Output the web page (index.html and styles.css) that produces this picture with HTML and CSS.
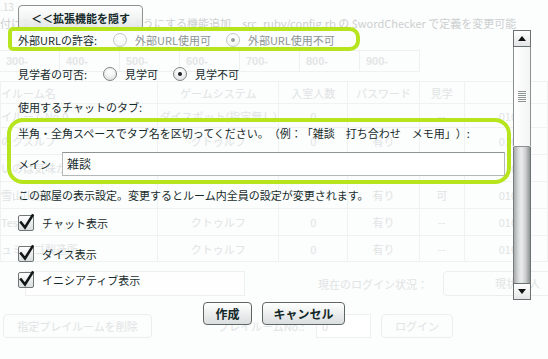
FILE: index.html
```html
<!DOCTYPE html>
<html lang="ja">
<head>
<meta charset="utf-8">
<title>プレイルーム作成</title>
<link rel="stylesheet" href="styles.css">
</head>
<body>
<div class="page">
  <div class="ver">.13</div>
  <div class="news">付けた場合にも入室できるようにする機能追加　src_ruby/config.rb の $wordChecker で定義を変更可能</div>
  <div class="ranges"><span>300-</span><span>400-</span><span>500-</span><span>600-</span><span>700-</span><span>800-</span><span>900-</span></div>
  <table class="rooms">
    <tr class="head"><th class="c-name">イルーム名</th><th class="c-game">ゲームシステム</th><th class="c-num">入室人数</th><th class="c-pass">パスワード</th><th class="c-view">見学</th><th class="c-date"></th></tr>
    <tr class="r-short"><td class="c-name">イルームNo.0</td><td>ダイスボット(指定無し)</td><td>0</td><td></td><td>--</td><td class="c-date">010</td></tr>
    <tr><td class="c-name">のクスルフ</td><td>クトゥルフ</td><td>0</td><td>有り</td><td></td><td class="c-date">010</td></tr>
    <tr><td class="c-name">いのは気味が</td><td>クトゥルフ</td><td>0</td><td>有り</td><td>--</td><td class="c-date">010</td></tr>
    <tr><td class="c-name">雪山山荘</td><td></td><td></td><td>有り</td><td>可</td><td class="c-date">010</td></tr>
    <tr><td class="c-name">Test</td><td>クトゥルフ</td><td>0</td><td>有り</td><td>--</td><td class="c-date">010</td></tr>
    <tr class="r-last"><td class="c-name">ュミンゴ製造所</td><td>クトゥルフ</td><td>0</td><td>有り</td><td>--</td><td class="c-date">010</td></tr>
  </table>
  <div class="login">
    <span class="ghost-box"></span>
    <span class="login-label">現在のログイン状況：</span>
    <span class="login-box">現状27人</span>
  </div>
  <div class="ghost-actions">
    <span class="ghost-btn del">指定プレイルームを削除</span>
    <span class="no-label">プレイルームNo.:</span>
    <span class="ghost-input">0</span>
    <span class="ghost-btn enter">ログイン</span>
  </div>
</div>

<div class="dialog">
  <div class="top"><button class="btn toggle">＜＜拡張機能を隠す</button></div>
  <div class="panel">
    <div class="content">
      <div class="row r1">
        <span class="lbl">外部URLの許容:</span>
        <label class="opt disabled"><span class="radio"></span>外部URL使用可</label>
        <label class="opt disabled"><span class="radio on"></span>外部URL使用不可</label>
      </div>
      <div class="row r2">
        <span class="lbl">見学者の可否:</span>
        <label class="opt"><span class="radio"></span>見学可</label>
        <label class="opt"><span class="radio on"></span>見学不可</label>
      </div>
      <div class="row r3">使用するチャットのタブ:</div>
      <div class="row r4">半角・全角スペースでタブ名を区切ってください。（例：「雑談　打ち合わせ　メモ用」）:</div>
      <div class="row r5">
        <span class="lbl">メイン</span>
        <span class="field">雑談</span>
      </div>
      <div class="row r6">この部屋の表示設定。変更するとルーム内全員の設定が変更されます。</div>
      <label class="row check c1"><span class="cbox"><svg viewBox="0 0 16 16" width="16" height="16"><path d="M3 7.5 L7 12.5 L14.5 0.5" /></svg></span>チャット表示</label>
      <label class="row check c2"><span class="cbox"><svg viewBox="0 0 16 16" width="16" height="16"><path d="M3 7.5 L7 12.5 L14.5 0.5" /></svg></span>ダイス表示</label>
      <label class="row check c3"><span class="cbox"><svg viewBox="0 0 16 16" width="16" height="16"><path d="M3 7.5 L7 12.5 L14.5 0.5" /></svg></span>イニシアティブ表示</label>
    </div>
    <div class="scrollbar">
      <div class="sb-btn"><svg viewBox="0 0 8 5" width="8" height="5"><path d="M0 5 L4 0 L8 5 Z"/></svg></div>
      <div class="sb-thumb"><span class="grip"></span></div>
      <div class="sb-track"></div>
      <div class="sb-btn"><svg viewBox="0 0 8 5" width="8" height="5"><path d="M0 0 L8 0 L4 5 Z"/></svg></div>
    </div>
  </div>
  <div class="actions">
    <button class="btn act make">作成</button>
    <button class="btn act cancel">キャンセル</button>
  </div>
</div>

<div class="mark mark1"></div>
<div class="mark mark2"></div>
</body>
</html>
```

FILE: styles.css
```css
* { box-sizing: border-box; }
html, body { margin: 0; padding: 0; }
body {
  width: 548px;
  height: 359px;
  overflow: hidden;
  position: relative;
  background: #fcfdfd;
  font-family: "Noto Sans CJK JP", "Noto Sans", sans-serif;
  font-size: 11px;
  color: #172b2b;
  text-spacing-trim: space-all;
}

/* ---------- faded page behind the dialog ---------- */
.page {
  width: 548px;
  height: 359px;
  overflow: hidden;
  color: #e0e4e4;
  font-size: 11px;
}
.ver {
  height: 14px;
  padding-top: 1px;
  line-height: 12px;
  font-size: 10px;
  color: #d6dada;
}
.news {
  margin-top: 2px;
  height: 14px;
  line-height: 14px;
  white-space: nowrap;
  color: #ccd0d0;
}
.ranges {
  display: flex;
  margin-top: 20px;
  height: 22px;
}
.ranges span {
  width: 60px;
  flex-shrink: 0;
  border: 1px solid #eff1f1;
  border-left: none;
  padding-left: 6px;
  line-height: 20px;
  font-family: "Liberation Sans", sans-serif;
  font-weight: bold;
  color: #e3e6e6;
}
.rooms {
  margin-top: 9px;
  border-collapse: collapse;
  table-layout: fixed;
}
.rooms th, .rooms td {
  height: 27px;
  padding: 0;
  border: 1px solid #f0f2f2;
  font-weight: normal;
  text-align: center;
  white-space: nowrap;
  overflow: hidden;
}
.rooms .head th { height: 22px; }
.rooms .r-short td { height: 24px; }
.rooms .r-last td { height: 26px; }
.rooms .c-name { width: 175px; text-align: left; }
.rooms .c-game { width: 122px; }
.rooms .c-num { width: 74px; }
.rooms .c-pass { width: 75px; }
.rooms .c-view { width: 50px; }
.rooms .c-date { width: 90px; text-align: left; padding-left: 34px; }

.login {
  margin-top: 9px;
  height: 25px;
  display: flex;
  align-items: center;
}
.login > span { flex-shrink: 0; }
.ghost-box {
  margin-left: 25px;
  width: 220px;
  height: 25px;
  border: 1px solid #eef0f0;
  background: #fefefe;
}
.login-label {
  margin-left: 73px;
  width: 125px;
  white-space: nowrap;
}
.login-box {
  width: 130px;
  height: 25px;
  border: 1px solid #eceeee;
  border-radius: 4px;
  padding-left: 51px;
  line-height: 23px;
  white-space: nowrap;
}
.ghost-actions {
  margin-top: 18px;
  height: 24px;
  display: flex;
  align-items: center;
  white-space: nowrap;
}
.ghost-actions > span { flex-shrink: 0; }
.ghost-btn {
  height: 24px;
  border: 1px solid #eceeee;
  border-radius: 4px;
  text-align: center;
  line-height: 22px;
}
.ghost-btn.del { margin-left: 3px; width: 149px; }
.no-label { margin-left: 66px; width: 98px; }
.ghost-input {
  width: 55px;
  height: 24px;
  border: 1px solid #eef0f0;
  background: #fff;
  padding-left: 5px;
  line-height: 22px;
}
.ghost-btn.enter { margin-left: 10px; width: 72px; }

/* ---------- dialog ---------- */
.dialog {
  position: absolute;
  left: 0;
  top: 0;
  width: 548px;
  height: 359px;
  display: flex;
  flex-direction: column;
}
.top {
  height: 30px;
  padding: 5px 0 0 18px;
}
.btn {
  font-family: "Noto Sans CJK JP", "Noto Sans", sans-serif;
  font-weight: bold;
  color: #132828;
  padding: 0;
  cursor: pointer;
}
.toggle {
  width: 125px;
  height: 25px;
  font-size: 11px;
  border: 1px solid #8c9191;
  border-radius: 4px;
  background: linear-gradient(rgba(255,255,255,0.85), rgba(226,229,229,0.85));
}
.panel {
  display: flex;
  width: 531px;
  height: 270px;
}
.content {
  width: 513px;
  overflow: hidden;
  padding-left: 18px;
  display: flex;
  flex-direction: column;
}
.row {
  height: 20px;
  display: flex;
  align-items: center;
  white-space: nowrap;
  flex-shrink: 0;
}
.r2 { margin-top: 14px; }
.r3 { margin-top: 13px; }
.r4 { margin-top: 6px; }
.r5 { margin-top: 9px; height: 24px; }
.r6 { margin-top: 9px; }
.c1 { margin-top: 8px; }
.c2 { margin-top: 11px; }
.c3 { margin-top: 6px; }

.r1 .lbl { width: 95px; }
.r2 .lbl { width: 85px; }
.opt {
  display: flex;
  align-items: center;
  gap: 8px;
  margin-right: 15px;
}
.opt.disabled { color: #8d9494; }
.radio {
  width: 14px;
  height: 14px;
  border-radius: 50%;
  border: 1px solid #7e8585;
  background: radial-gradient(circle at 50% 30%, #ffffff 0%, #f2f3f3 45%, #d3d7d7 100%);
  position: relative;
}
.radio.on::after {
  content: "";
  position: absolute;
  left: 4px;
  top: 4px;
  width: 4px;
  height: 4px;
  border-radius: 50%;
  background: #1a1f1f;
}
.disabled .radio {
  border-color: #c3c8c8;
  background: radial-gradient(circle at 50% 30%, #ffffff 0%, #f7f8f8 60%, #e6e9e9 100%);
}
.disabled .radio.on::after { background: #9aa0a0; }

.r5 .lbl { width: 44px; }
.field {
  width: 443px;
  height: 24px;
  border: 1px solid #b3b8b8;
  border-top-color: #8f9595;
  background: #fff;
  padding-left: 4px;
  line-height: 22px;
  font-size: 12px;
}

.check { gap: 8px; }
.cbox {
  width: 16px;
  height: 16px;
  border: 1px solid #6f7676;
  border-radius: 2px;
  background: linear-gradient(#ffffff, #d9dddd);
  overflow: visible;
}
.cbox svg { display: block; margin: -1px 0 0 -1px; overflow: visible; }
.cbox path {
  fill: none;
  stroke: #111616;
  stroke-width: 2.6;
  stroke-linecap: square;
  stroke-linejoin: miter;
}

/* ---------- scrollbar ---------- */
.scrollbar {
  width: 18px;
  display: flex;
  flex-direction: column;
  background: #fcfdfd;
}
.sb-btn {
  height: 17px;
  border: 1px solid #6a7070;
  background: linear-gradient(#ffffff, #e3e6e6);
  display: flex;
  align-items: center;
  justify-content: center;
}
.sb-btn svg path { fill: #111; }
.sb-thumb {
  height: 100px;
  border: 1px solid #8b9191;
  border-top: none;
  border-radius: 0 0 2px 2px;
  background: linear-gradient(to right, #ffffff, #f3f4f4);
  display: flex;
  align-items: center;
  justify-content: center;
}
.grip {
  width: 8px;
  height: 11px;
  background: repeating-linear-gradient(#8e9494 0 1px, transparent 1px 2px);
}
.sb-track {
  flex: 1;
  border-left: 1px solid #777d7d;
  border-right: 1px solid #6c7272;
  background: linear-gradient(to right, #a7abab 0%, #d4d7d7 25%, #eceeee 45%, #d0d3d3 70%, #8e9393 100%);
}

/* ---------- bottom buttons ---------- */
.actions {
  display: flex;
  justify-content: center;
  gap: 10px;
  padding-top: 2px;
}
.act {
  height: 23px;
  font-size: 12px;
  border: 1px solid #5f6666;
  border-radius: 4px;
  background: linear-gradient(#ffffff, #dadede);
}
.make { width: 49px; }
.cancel { width: 83px; }

/* ---------- annotation marks ---------- */
.mark {
  position: absolute;
  border: 4px solid #b6e51d;
  pointer-events: none;
}
.mark1 {
  left: 8px;
  top: 27px;
  width: 352px;
  height: 24px;
  border-radius: 5px 10px 10px 5px;
}
.mark2 {
  left: 7px;
  top: 118px;
  width: 504px;
  height: 66px;
  border-radius: 16px;
}
```
